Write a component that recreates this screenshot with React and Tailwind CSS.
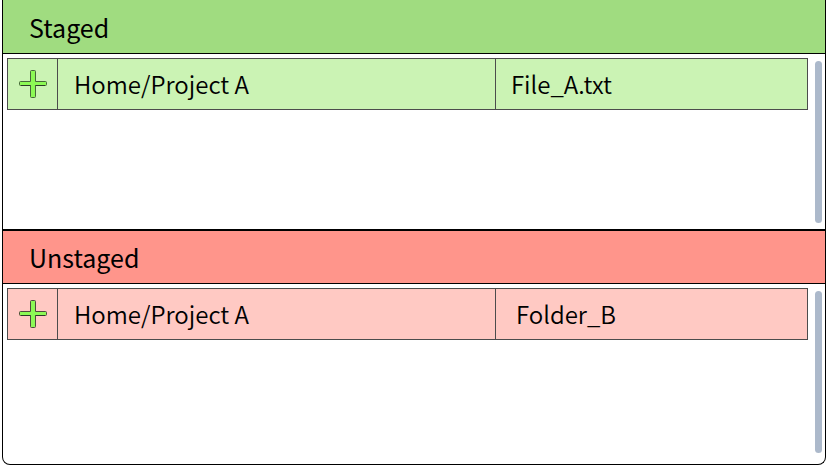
import React from "react";

const sections = [
  {
    title: "Staged",
    header: "h-[54px] bg-[#a0dc80]",
    row: "bg-[#cbf3b4]",
    name: "pl-[15px]",
    wrapper: "",
    path: "Home/Project A",
    file: "File_A.txt",
    plus: "#8cf955",
    outline: "#46663a",
  },
  {
    title: "Unstaged",
    header: "h-[55px] border-t-2 bg-[#ff958b]",
    row: "bg-[#ffc9c3]",
    name: "pl-5",
    wrapper: "grow",
    path: "Home/Project A",
    file: "Folder_B",
    plus: "#8cf955",
    outline: "#4e4a3c",
  },
];

function PlusIcon({ fill, outline }) {
  return (
    <svg viewBox="0 0 30 30" className="size-[30px]" aria-hidden="true">
      <path
        d="M13.5 1.5h3q1 0 1 1v10h10q1 0 1 1v2q0 1-1 1h-10v11q0 1-1 1h-3q-1 0-1-1v-11h-10q-1 0-1-1v-2q0-1 1-1h10v-10q0-1 1-1z"
        fill={fill}
        stroke={outline}
        strokeWidth="1"
      />
      <path d="M3 16.5H12.5M17.5 16.5H27" fill="none" stroke="#2b3a26" strokeWidth="1" />
    </svg>
  );
}

function Section({ title, header, row, name, wrapper, path, file, plus, outline }) {
  return (
    <section className={wrapper}>
      <h2 className={`flex items-center border-b border-black pl-[26px] text-[25px] ${header}`}>{title}</h2>
      <div className="flex gap-[7px] pt-1 pr-[3px] pb-[6px] pl-1">
        <table className="h-[52px] grow table-fixed border-collapse self-start font-[350]" aria-label={title}>
          <tbody>
            <tr className={row}>
              <td className="w-[50px] border border-[#4c4c4c] p-0">
                <button type="button" aria-label={`Toggle ${file}`} className="flex w-full items-center justify-center">
                  <PlusIcon fill={plus} outline={outline} />
                </button>
              </td>
              <td className="border border-[#4c4c4c] p-0 pl-4">{path}</td>
              <td className={`w-[39%] border border-[#4c4c4c] p-0 ${name}`}>{file}</td>
            </tr>
          </tbody>
        </table>
        <div className="mt-[3px] h-[162px] w-[7px] rounded-full bg-[#acb9cb]" />
      </div>
    </section>
  );
}

export default function App() {
  return (
    <div className="min-h-screen bg-white pr-px pb-px pl-[2px]">
      <main className="flex min-h-[calc(100vh-1px)] flex-col overflow-hidden rounded-b-lg border-x border-b border-black bg-white font-['Noto_Sans_CJK_SC','Noto_Sans',sans-serif] text-2xl leading-8 text-black">
        {sections.map((section) => (
          <Section key={section.title} {...section} />
        ))}
      </main>
    </div>
  );
}
